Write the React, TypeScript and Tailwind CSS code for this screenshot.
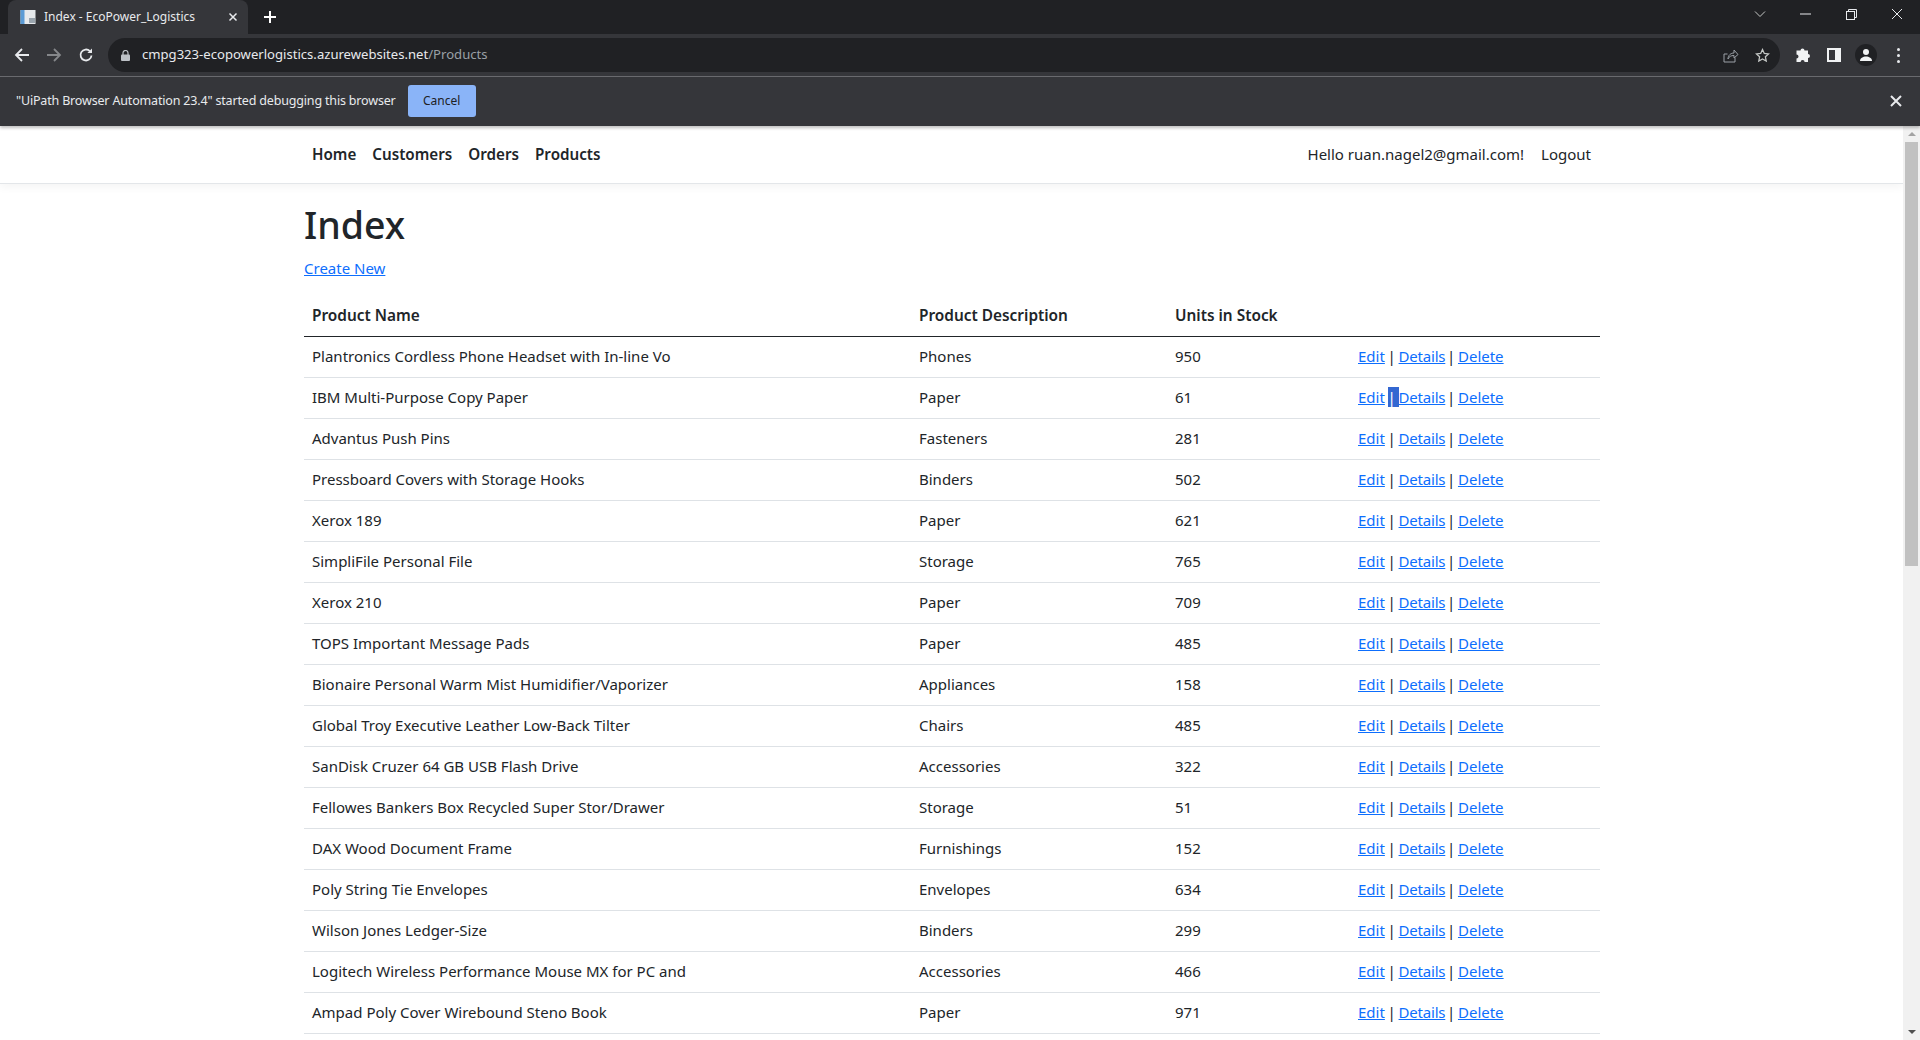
const rows: [string, string, number][] = [
  ["Plantronics Cordless Phone Headset with In-line Vo", "Phones", 950],
  ["IBM Multi-Purpose Copy Paper", "Paper", 61],
  ["Advantus Push Pins", "Fasteners", 281],
  ["Pressboard Covers with Storage Hooks", "Binders", 502],
  ["Xerox 189", "Paper", 621],
  ["SimpliFile Personal File", "Storage", 765],
  ["Xerox 210", "Paper", 709],
  ["TOPS Important Message Pads", "Paper", 485],
  ["Bionaire Personal Warm Mist Humidifier/Vaporizer", "Appliances", 158],
  ["Global Troy Executive Leather Low-Back Tilter", "Chairs", 485],
  ["SanDisk Cruzer 64 GB USB Flash Drive", "Accessories", 322],
  ["Fellowes Bankers Box Recycled Super Stor/Drawer", "Storage", 51],
  ["DAX Wood Document Frame", "Furnishings", 152],
  ["Poly String Tie Envelopes", "Envelopes", 634],
  ["Wilson Jones Ledger-Size", "Binders", 299],
  ["Logitech Wireless Performance Mouse MX for PC and", "Accessories", 466],
  ["Ampad Poly Cover Wirebound Steno Book", "Paper", 971],
]

function TabStrip() {
  return (
    <div className="h-[34px] bg-[#202124] flex items-end shrink-0">
      <div className="ml-2 w-[240px] h-[34px] bg-[#35363a] rounded-t-lg flex items-center pl-[12px] pr-[10px] text-[#e8eaed] text-[12px]">
        <svg width="16" height="16" viewBox="0 0 16 16" className="mr-[8px] shrink-0">
          <rect x="0.5" y="1" width="15" height="14" fill="#e6e9ec" />
          <rect x="0.5" y="1" width="4" height="14" fill="#5b9bd5" />
          <rect x="9" y="9" width="6" height="5" fill="#9aa5ae" />
        </svg>
        <span className="flex-1">Index - EcoPower_Logistics</span>
        <svg width="10" height="10" viewBox="0 0 10 10" stroke="#e8eaed" strokeWidth="1.5">
          <path d="M1.5 1.5l7 7M8.5 1.5l-7 7" />
        </svg>
      </div>
      <svg width="14" height="14" viewBox="0 0 14 14" stroke="#ffffff" strokeWidth="2" className="ml-[15px] mb-[10px]">
        <path d="M7 1v12M1 7h12" />
      </svg>
      <div className="flex-1" />
      <div className="flex items-center h-[28px] self-start">
        <svg width="12" height="8" viewBox="0 0 12 8" fill="none" stroke="#c4c7c5" strokeWidth="1" className="mr-[34px]">
          <path d="M1 1.5l5 5 5-5" />
        </svg>
        <svg width="12" height="2" viewBox="0 0 12 2" stroke="#e8eaed" className="mr-[34px]">
          <path d="M0 1h11" />
        </svg>
        <svg width="11" height="11" viewBox="0 0 11 11" fill="none" stroke="#e8eaed" className="mr-[34px]">
          <rect x="0.5" y="2.5" width="8" height="8" />
          <path d="M2.5 2.5v-2h8v8h-2" />
        </svg>
        <svg width="12" height="12" viewBox="0 0 12 12" stroke="#e8eaed" className="mr-[17px]">
          <path d="M1 1l10 10M11 1L1 11" />
        </svg>
      </div>
    </div>
  )
}

function Toolbar() {
  return (
    <div className="h-[43px] bg-[#35363a] border-b border-[#6b6c70] flex items-center shrink-0">
      <svg width="16" height="16" viewBox="0 0 16 16" fill="none" stroke="#e8eaed" strokeWidth="1.8" className="ml-[14px]">
        <path d="M15 8H2M8 2L2 8l6 6" />
      </svg>
      <svg width="16" height="16" viewBox="0 0 16 16" fill="none" stroke="#85878a" strokeWidth="1.8" className="ml-[16px]">
        <path d="M1 8h13M8 2l6 6-6 6" />
      </svg>
      <svg width="16" height="16" viewBox="0 0 16 16" fill="none" stroke="#e8eaed" strokeWidth="1.8" className="ml-[16px]">
        <path d="M13.500 8.500a5.500 5.500 0 1 1-1.600-4.400" />
        <path d="M14 1.500v4.600H9.400" fill="#e8eaed" stroke="none" />
      </svg>
      <div className="ml-[14px] w-[1672px] h-[34px] rounded-full bg-[#202124] flex items-center text-[13.1px]">
        <svg width="9" height="11" viewBox="0 0 9 11" className="ml-[13px]">
          <rect x="0" y="4.500" width="9" height="6.500" rx="1" fill="#bdc1c6" />
          <path d="M2 5V3a2.500 2.500 0 0 1 5 0v2" fill="none" stroke="#bdc1c6" strokeWidth="1.200" />
        </svg>
        <span className="ml-[12px] text-[#e8eaed]">cmpg323-ecopowerlogistics.azurewebsites.net</span>
        <span className="text-[#9aa0a6]">/Products</span>
        <div className="flex-1" />
        <svg width="16" height="15" viewBox="0 0 16 15" fill="none" stroke="#9aa0a6" strokeWidth="1" className="mr-[16px]">
          <path d="M12 9.500v4.500H1V6h3.500" />
          <path d="M5 11c0-4 3-6 6-6V2l4 4.500L11 10V7.500c-3 0-5 1-6 3.500z" />
        </svg>
        <svg width="15" height="15" viewBox="0 0 15 15" fill="none" stroke="#c4c7c5" strokeWidth="1.300" className="mr-[10px]">
          <path d="M7.500 1.500l1.800 3.900 4.200.5-3.100 2.900.8 4.200-3.700-2.100-3.700 2.100.8-4.200L1.500 5.900l4.200-.5z" />
        </svg>
      </div>
      <svg width="15" height="15" viewBox="0 0 15 15" fill="#f1f3f4" className="ml-[15px]">
        <path d="M5.500 2.500a2 2 0 0 1 4 0H13v3.400a2 2 0 0 1 0 4V14H9.600a2 2 0 0 0-4 0H1.500v-3.600a2 2 0 0 0 0-4V2.500z" />
      </svg>
      <svg width="14" height="14" viewBox="0 0 14 14" className="ml-[17px]">
        <path fillRule="evenodd" d="M0 0h14v14H0zM2 2v10h6V2z" fill="#f1f3f4" />
      </svg>
      <div className="ml-[14px] w-[22px] h-[22px] rounded-full bg-[#202124] flex items-center justify-center">
        <svg width="14" height="14" viewBox="0 0 14 14" fill="#f1f3f4">
          <circle cx="7" cy="4" r="3" />
          <path d="M1 13c0-3 3-4.500 6-4.500s6 1.500 6 4.500z" />
        </svg>
      </div>
      <div className="ml-[20px] flex flex-col gap-[3px]">
        <div className="w-[3px] h-[3px] rounded-full bg-[#e8eaed]" />
        <div className="w-[3px] h-[3px] rounded-full bg-[#e8eaed]" />
        <div className="w-[3px] h-[3px] rounded-full bg-[#e8eaed]" />
      </div>
    </div>
  )
}

function DebugBar() {
  return (
    <div className="h-[49px] bg-[#35363a] flex items-center shrink-0 text-[12.5px] tracking-[-0.17px] text-[#e8eaed] shadow-[0_2px_3px_rgba(0,0,0,0.25)] z-10 relative">
      <span className="ml-[16px]">"UiPath Browser Automation 23.4" started debugging this browser</span>
      <div className="ml-[12px] mb-[1px] w-[68px] h-[32px] rounded-[3px] bg-[#8ab4f8] text-[#202124] text-[12px] tracking-normal flex items-center justify-center">
        Cancel
      </div>
      <div className="flex-1" />
      <svg width="12" height="12" viewBox="0 0 12 12" stroke="#e8eaed" strokeWidth="2" className="mr-[18px] mb-[1px]">
        <path d="M1 1l10 10M11 1L1 11" />
      </svg>
    </div>
  )
}

function Scrollbar() {
  return (
    <div className="w-[17px] bg-[#f1f1f1] flex flex-col items-center shrink-0">
      <div className="mt-[6px] w-0 h-0 border-x-[4px] border-x-transparent border-b-[4px] border-b-[#a3a3a3]" />
      <div className="mt-[6px] w-[13px] h-[424px] bg-[#c1c1c1]" />
      <div className="flex-1" />
      <div className="mb-[6px] w-0 h-0 border-x-[4px] border-x-transparent border-t-[4px] border-t-[#505050]" />
    </div>
  )
}

export default function App() {
  return (
    <div className="h-[1040px] w-[1920px] overflow-hidden flex flex-col bg-white font-['Noto_Sans',sans-serif]">
      <TabStrip />
      <Toolbar />
      <DebugBar />
      <div className="flex-1 flex min-h-0">
        <div className="flex-1 min-w-0 overflow-hidden text-[#212529] text-[15px]">
          <nav className="h-[58px] border-b border-[#e3e6e9] shadow-[0_4px_8px_rgba(0,0,0,0.04)] flex items-center pl-[312px] pr-[312px]">
            <div className="flex gap-[16px] font-semibold text-[15.2px]">
              <span>Home</span>
              <span>Customers</span>
              <span>Orders</span>
              <span>Products</span>
            </div>
            <div className="flex-1" />
            <span className="mb-[1px]">Hello ruan.nagel2@gmail.com!</span>
            <span className="ml-[17px]">Logout</span>
          </nav>
          <main className="ml-[304px] w-[1296px]">
            <h1 className="mt-[17px] text-[37.5px] leading-[48px] font-medium">Index</h1>
            <a className="block mt-[7px] text-[#0d6efd] underline leading-[24px]">Create New</a>
            <table className="mt-[16px] w-full table-fixed border-collapse">
              <thead>
                <tr className="h-[40px] border-b border-[#212529] text-left text-[15.4px]">
                  <th className="w-[607px] px-2 font-semibold">Product Name</th>
                  <th className="w-[256px] px-2 font-semibold">Product Description</th>
                  <th className="w-[183px] px-2 font-semibold">Units in Stock</th>
                  <th />
                </tr>
              </thead>
              <tbody>
                {rows.map((row, i) => (
                  <tr key={i} className="h-[41px] border-b border-[#dee2e6]">
                    <td className="px-2">{row[0]}</td>
                    <td className="px-2">{row[1]}</td>
                    <td className="px-2">{row[2]}</td>
                    <td className="px-2 [word-spacing:-1.2px]">
                      <a className="text-[#0d6efd] underline">Edit</a>{" "}
                      {i === 1 ? <span className="bg-[#3367d1] text-white">|&nbsp;</span> : "| "}
                      <a className="text-[#0d6efd] underline tracking-[-0.2px] mr-[-1px]">Details</a> |{" "}
                      <a className="text-[#0d6efd] underline">Delete</a>
                    </td>
                  </tr>
                ))}
              </tbody>
            </table>
          </main>
        </div>
        <Scrollbar />
      </div>
    </div>
  )
}
